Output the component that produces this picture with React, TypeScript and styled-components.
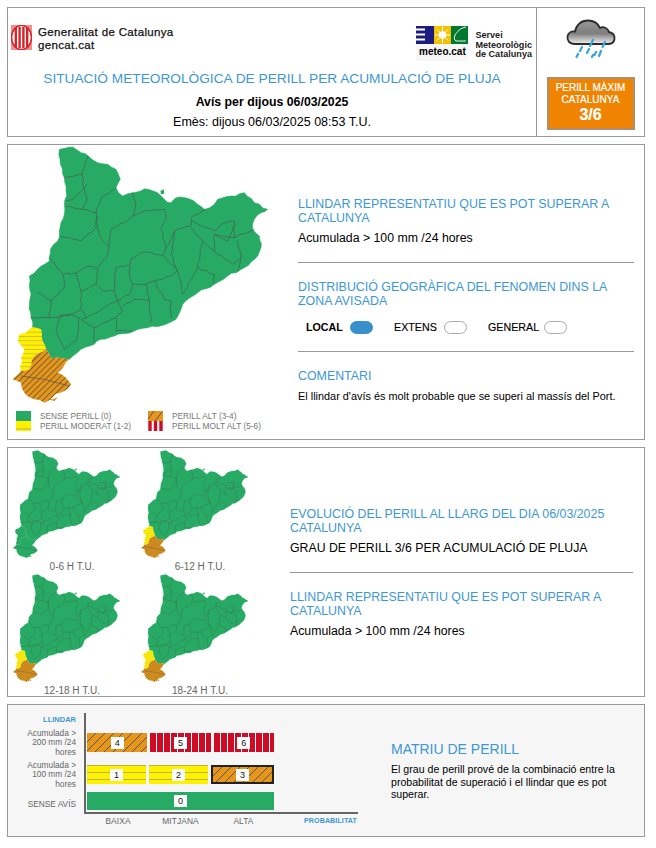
import React from "react";
import styled, { createGlobalStyle } from "styled-components";

const Global = createGlobalStyle`
  html, body { margin: 0; padding: 0; background: #fff; }
  body { font-family: "Liberation Sans", Arial, sans-serif; color: #000; }
`;

const Page = styled.div`
  width: 656px;
  height: 848px;
  box-sizing: border-box;
  padding: 7px 11px 0 7px;
  display: flex;
  flex-direction: column;
  gap: 7px;
`;

const Panel = styled.section<{ $h: number; $shade?: boolean }>`
  height: ${(p) => p.$h}px;
  box-sizing: border-box;
  border: 1px solid #999;
  background: ${(p) => (p.$shade ? "#f6f6f6" : "#fff")};
  display: flex;
`;

/* Header */
const HeadMain = styled.div`
  width: 529px;
  box-sizing: border-box;
  border-right: 1px solid #999;
  display: flex;
  flex-direction: column;
`;
const LogoRow = styled.div`
  display: flex;
  justify-content: space-between;
  align-items: flex-start;
  height: 57px;
  padding: 17px 4px 0 3px;
  box-sizing: border-box;
`;
const BrandLeft = styled.div`
  display: flex;
  gap: 6px;
  align-items: center;
  height: 25px;
`;
const MarkSlot = styled.div`
  margin-top: -1px;
  line-height: 0;
`;
const BrandName = styled.div`
  margin-top: 2px;
  font-size: 11.5px;
  line-height: 13px;
  letter-spacing: 0.35px;
  color: #111;
  -webkit-text-stroke: 0.25px #111;
`;
const BrandRight = styled.div`
  display: flex;
  gap: 7px;
  align-items: flex-start;
`;
const MeteoLogo = styled.div`
  width: 52px;
  height: 35px;
  margin-top: 1px;
  display: flex;
  flex-direction: column;
  background: #f7f7f7;
`;
const MeteoName = styled.div`
  font-size: 10px;
  font-weight: 700;
  line-height: 15px;
  text-align: center;
`;
const ServeiName = styled.div`
  margin-top: 6px;
  font-size: 9.1px;
  font-weight: 700;
  line-height: 9.5px;
  color: #222;
`;
const HeadTitle = styled.h1`
  margin: 0;
  font-size: 13.7px;
  line-height: 18px;
  font-weight: 400;
  color: #3d97d3;
  text-align: center;
  padding-top: 5px;
`;
const HeadDate = styled.div`
  margin-top: 7px;
  font-size: 12.3px;
  line-height: 14px;
  font-weight: 700;
  text-align: center;
`;
const HeadIssued = styled.div`
  margin-top: 6px;
  font-size: 12.5px;
  line-height: 14px;
  text-align: center;
`;
const HeadSide = styled.div`
  flex: 1;
  display: flex;
  flex-direction: column;
  align-items: center;
  padding-top: 11px;
`;
const MaxBadge = styled.div`
  width: 88px;
  height: 53px;
  margin-top: 16px;
  box-sizing: border-box;
  border: 2px solid #b08d6c;
  background: #f08400;
  color: #fff;
  text-align: center;
  font-size: 10px;
  line-height: 12px;
  padding-top: 3px;
  -webkit-text-stroke: 0.2px #fff;
`;
const MaxValue = styled.div`
  font-size: 16px;
  line-height: 18px;
  font-weight: 700;
`;

/* Map panels */
const MapColumn = styled.div`
  width: 290px;
  flex: none;
  display: flex;
  flex-direction: column;
`;
const BigMap = styled.svg`
  width: 283px;
  height: 263px;
  display: block;
  flex: none;
`;
const Legend = styled.div`
  display: grid;
  grid-template-columns: 132px 1fr;
  padding: 3px 0 0 8px;
`;
const LegendItem = styled.div`
  display: flex;
  align-items: center;
  height: 10px;
  font-size: 8.3px;
  color: #777;
`;
const Swatch = styled.svg`
  width: 15px;
  height: 10px;
  margin-right: 9px;
  flex: none;
`;
const InfoColumn = styled.div<{ $pad: number; $top: number; $w: number }>`
  width: ${(p) => p.$w}px;
  margin-left: ${(p) => p.$pad}px;
  padding-top: ${(p) => p.$top}px;
`;
const InfoTitle = styled.h2`
  margin: 0;
  font-size: 12.4px;
  line-height: 14px;
  font-weight: 400;
  color: #3d97d3;
`;
const InfoText = styled.p<{ $small?: boolean }>`
  margin: 6px 0 0;
  font-size: ${(p) => (p.$small ? "10.9px" : "12.3px")};
  line-height: 14px;
`;
const Rule = styled.hr<{ $gap: number; $after: number }>`
  border: 0;
  height: 1px;
  background: #999;
  margin: ${(p) => p.$gap}px 0 ${(p) => p.$after}px;
`;
const Options = styled.div`
  display: flex;
  align-items: center;
  height: 16px;
  margin: 11px 0 0 8px;
  font-size: 10.7px;
`;
const OptionLabel = styled.span<{ $on?: boolean; $w: number }>`
  display: inline-block;
  width: ${(p) => p.$w}px;
  font-weight: ${(p) => (p.$on ? 700 : 400)};
  -webkit-text-stroke: ${(p) => (p.$on ? "0" : "0.15px #000")};
`;
const Toggle = styled.span<{ $on?: boolean; $mr: number }>`
  display: inline-block;
  width: 23px;
  height: 13px;
  border-radius: 7px;
  box-sizing: border-box;
  margin-right: ${(p) => p.$mr}px;
  background: ${(p) => (p.$on ? "#3790c9" : "#fff")};
  border: 1px solid ${(p) => (p.$on ? "#3790c9" : "#aaa")};
`;
const MapsGrid = styled.div`
  width: 256px;
  flex: none;
  display: grid;
  grid-template-columns: 128px 128px;
  grid-auto-rows: 124px;
`;
const MapCell = styled.figure`
  margin: 0;
  display: flex;
  flex-direction: column;
  align-items: flex-start;
`;
const SmallMap = styled.svg`
  width: 122px;
  height: 112px;
  display: block;
`;
const MapCaption = styled.figcaption`
  width: 128px;
  margin-top: 2px;
  text-align: center;
  font-size: 10px;
  line-height: 10px;
  color: #666;
`;

/* Matrix */
const MatrixChart = styled.div`
  width: 383px;
  flex: none;
  display: flex;
  flex-direction: column;
  padding-top: 8px;
  box-sizing: border-box;
`;
const ChartBody = styled.div`
  display: flex;
`;
const YLabels = styled.div`
  width: 68px;
  flex: none;
  text-align: right;
  color: #666;
  font-size: 8.3px;
`;
const YTitle = styled.div`
  height: 12px;
  line-height: 14px;
  font-size: 7.5px;
  font-weight: 700;
  color: #3d97d3;
`;
const YRow = styled.div<{ $h: number; $mt: number }>`
  height: ${(p) => p.$h}px;
  margin-top: ${(p) => p.$mt}px;
  line-height: 9.5px;
  display: flex;
  align-items: center;
  justify-content: flex-end;
`;
const Plot = styled.div`
  margin-left: 8px;
  width: 274px;
  height: 101px;
  box-sizing: border-box;
  border-left: 2px solid #666;
  border-bottom: 2px solid #666;
  padding: 20px 0 0 1px;
  display: flex;
  flex-direction: column;
`;
const CellRow = styled.div<{ $mt?: number; $h?: number }>`
  display: flex;
  gap: 3px;
  width: 187px;
  height: ${(p) => p.$h ?? 19}px;
  margin-top: ${(p) => p.$mt ?? 0}px;
`;
const cellBg: Record<string, string> = {
  red: "repeating-linear-gradient(90deg,#ce0c25 0 5.7px,#fff 5.7px 7px)",
  orange: "repeating-linear-gradient(135deg,#e7961a 0 5.8px,#555 5.8px 6.5px)",
  yellow: "repeating-linear-gradient(180deg,#bdb23a 0 1px,#fff200 1px 7px)",
  green: "#27ab64",
};
const Cell = styled.div<{ $kind: string; $strong?: boolean }>`
  flex: 1;
  height: 100%;
  box-sizing: border-box;
  display: flex;
  align-items: center;
  justify-content: center;
  background: ${(p) => cellBg[p.$kind]};
  border: ${(p) => (p.$strong ? "2px solid #222" : "0")};
`;
const CellNum = styled.span`
  background: #fff;
  min-width: 12px;
  padding: 0 0.5px;
  height: 12px;
  line-height: 12px;
  font-size: 9px;
  text-align: center;
  color: #111;
`;
const XLabels = styled.div`
  display: flex;
  padding-left: 79px;
  font-size: 8.4px;
  line-height: 10px;
  color: #666;
  margin-top: 2px;
  letter-spacing: 0.1px;
`;
const XLabel = styled.span<{ $w: number }>`
  width: ${(p) => p.$w}px;
  text-align: center;
`;
const XTitle = styled.span`
  margin-left: 29px;
  font-size: 7.1px;
  font-weight: 700;
  color: #3d97d3;
`;
const MatrixInfo = styled.div`
  padding-top: 36px;
  width: 225px;
`;
const MatrixTitle = styled.h2`
  margin: 0;
  font-size: 14px;
  line-height: 16px;
  font-weight: 400;
  color: #3d97d3;
`;
const MatrixText = styled.p`
  margin: 6px 0 0;
  font-size: 10.6px;
  line-height: 12.5px;
`;

/* Hand-traced map shapes, roughened so that borders look like real coastlines. */
const noise = (a: number, b: number) => {
  const v = Math.sin(a * 12.9898 + b * 78.233) * 43758.5453;
  return v - Math.floor(v) - 0.5;
};
function rough(d: string, amp = 7): string {
  return d
    .split(/(?=M)/)
    .map((sub) => {
      const nums = (sub.match(/-?\d+(\.\d+)?/g) ?? []).map(Number);
      const pts: [number, number][] = [];
      for (let i = 0; i < nums.length; i += 2) pts.push([nums[i], nums[i + 1]]);
      if (/Z/.test(sub)) pts.push(pts[0]);
      let out = `M${pts[0][0]},${pts[0][1]}`;
      for (let i = 1; i < pts.length; i++) {
        let [a, b] = [pts[i - 1], pts[i]];
        const flip = a[0] > b[0] || (a[0] === b[0] && a[1] > b[1]);
        if (flip) [a, b] = [b, a];
        const len = Math.hypot(b[0] - a[0], b[1] - a[1]);
        const nx = -(b[1] - a[1]) / (len || 1);
        const ny = (b[0] - a[0]) / (len || 1);
        const steps = Math.max(1, Math.round(len / 14));
        const seg: [number, number][] = [];
        for (let s = 1; s < steps; s++) {
          const t = s / steps;
          const o = noise(a[0] + s, b[1] + s * 3) * amp;
          seg.push([a[0] + (b[0] - a[0]) * t + nx * o, a[1] + (b[1] - a[1]) * t + ny * o]);
        }
        if (flip) seg.reverse();
        seg.forEach((p) => (out += ` L${p[0].toFixed(1)},${p[1].toFixed(1)}`));
        out += ` L${pts[i][0]},${pts[i][1]}`;
      }
      return out + (/Z/.test(sub) ? " Z" : "");
    })
    .join(" ");
}

const OUTLINE = rough(
  "M175,25 L190,22 L215,18 L240,35 L262,45 L290,65 L320,70 L345,85 L358,115 L345,140 L365,165 L395,155 L430,143 L470,155 L490,175 L510,185 L525,170 L560,172 L590,190 L610,205 L640,190 L650,175 L690,165 L730,155 L760,185 L800,205 L780,215 L760,235 L755,265 L775,285 L780,320 L770,345 L730,380 L680,405 L640,430 L590,455 L545,490 L525,535 L495,550 L440,560 L400,570 L340,585 L300,595 L280,610 L240,625 L205,655 L150,652 L135,625 L122,590 L120,565 L95,558 L90,530 L85,490 L90,460 L85,405 L110,385 L145,360 L148,325 L170,300 L175,270 L190,220 L195,150 L190,110 L178,70 Z"
);
const YELLOW = rough(
  "M95,558 L120,565 L122,590 L135,625 L100,645 L85,685 L60,690 L60,650 L70,625 L50,600 L55,580 L75,575 Z"
);
const ORANGE = rough(
  "M135,625 L150,652 L205,655 L170,695 L195,710 L210,730 L190,750 L165,758 L130,785 L100,775 L70,755 L60,725 L35,715 L60,690 L85,685 L100,645 Z M140,775 L170,768 L160,780 Z"
);
const LINES = rough(
  [
    "M262,45 L245,90 L245,130 L258,170 L245,205 L285,215 L300,170 L345,140",
    "M190,110 L245,100",
    "M195,195 L245,205",
    "M258,130 L215,175 L195,180",
    "M175,285 L240,300 L285,260 L285,215",
    "M285,215 L290,260 L305,300 L325,320 L330,265 L380,238 L395,225 L430,210 L490,205 L495,235 L480,265 L495,320 L485,345 L450,335 L420,335 L390,355 L385,400 L395,430 L435,430",
    "M395,155 L405,190 L395,225",
    "M325,320 L320,345 L290,385 L285,430 L305,450 L340,450 L345,380 L385,370",
    "M145,350 L185,400 L225,395 L265,375 L290,385",
    "M185,400 L190,440 L150,480 L145,530 L210,520 L240,505 L240,450 L225,395",
    "M240,450 L285,430",
    "M240,505 L255,530 L300,505 L350,480 L340,450",
    "M350,480 L385,460 L395,430",
    "M350,480 L365,510 L345,530 L345,570 L395,570",
    "M255,530 L240,535 L280,560 L280,605",
    "M280,560 L345,530",
    "M210,520 L235,530 L225,600 L190,625 L165,570 L175,530 L210,520",
    "M365,495 L400,475 L445,480 L450,545",
    "M445,480 L435,430 L460,420 L490,475 L510,480 L510,530",
    "M460,420 L510,405 L530,390 L490,345",
    "M495,320 L520,270 L570,255 L570,230 L615,205",
    "M520,270 L510,340 L530,390 L545,460 L590,380 L640,400 L640,430",
    "M590,380 L605,300 L640,330 L640,280 L700,290 L700,240 L660,250 L640,270 L570,240",
    "M640,280 L680,300 L700,250",
    "M640,330 L695,370 L720,350 L710,390",
    "M700,290 L720,280 L760,265",
    "M720,350 L710,300",
    "M605,300 L570,260",
    "M90,530 L145,530",
    "M150,480 L110,455",
  ].join(" "),
  5
);

function MapShapes({ id, alert, lineW }: { id: string; alert: boolean; lineW: number }) {
  return (
    <>
      <defs>
        <pattern id={`${id}o`} width="13" height="13" patternUnits="userSpaceOnUse" patternTransform="rotate(45)">
          <rect width="13" height="13" fill="#e7961a" />
          <rect x="0" width="3" height="13" fill="#77602f" />
        </pattern>
        <pattern id={`${id}y`} width="12" height="13" patternUnits="userSpaceOnUse">
          <rect width="12" height="13" fill="#fff200" />
          <rect y="0" width="12" height="2.5" fill="#c9b933" />
        </pattern>
      </defs>
      <path d={OUTLINE} fill="#27ab64" stroke="#27ab64" strokeWidth="1.5" />
      <path d="M478,150 L488,145 L490,158 L480,160 Z" fill="#27ab64" />
      <path d={YELLOW} fill={alert ? `url(#${id}y)` : "#27ab64"} stroke={alert ? "none" : "#27ab64"} />
      <path d={ORANGE} fill={alert ? `url(#${id}o)` : "#27ab64"} stroke={alert ? "none" : "#27ab64"} />
      <path d="M60,705 L130,715 L205,735" fill="none" stroke="#555" strokeWidth={lineW} />
      <path d={LINES} fill="none" stroke="#46604f" strokeWidth={lineW} strokeLinejoin="round" />
    </>
  );
}

function GencatMark() {
  return (
    <svg width="21" height="25" viewBox="0 0 21 25" aria-hidden="true">
      <rect width="21" height="25" fill="#ef8f8f" />
      <ellipse cx="10.5" cy="12.5" rx="10" ry="12" fill="#fff" />
      <ellipse cx="10.5" cy="12.5" rx="10" ry="12" fill="none" stroke="#d8232a" strokeWidth="1.6" />
      {[3.6, 7.4, 11.2, 15].map((x) => (
        <rect key={x} x={x} y="2" width="2.4" height="21" fill="#d8232a" />
      ))}
    </svg>
  );
}

function MeteoIcons() {
  return (
    <svg width="52" height="18" viewBox="0 0 52 18" aria-hidden="true" style={{ flex: "none" }}>
      <rect width="18" height="18" fill="#1c1c80" />
      <path d="M0,3.5h9 M0,8.500h9 M0,13.500h9" stroke="#fff" strokeWidth="2" />
      <rect x="18" width="17" height="18" fill="#f2c200" />
      <path d="M26.5,1v16 M19,9h15 M21,3.500l11,11 M32,3.500l-11,11" stroke="#fff" strokeWidth="1" />
      <circle cx="26.5" cy="9" r="3.8" fill="#fff" />
      <rect x="35" width="17" height="18" fill="#00792f" />
      <path d="M50,1C44,2 41,6 39,9C38,12 38,14 40,15L50,15" fill="none" stroke="#fff" strokeWidth="0.9" />
    </svg>
  );
}

function RainCloud() {
  return (
    <svg width="50" height="42" viewBox="0 0 50 42" aria-hidden="true">
      <defs>
        <linearGradient id="cloudFill" x1="0" y1="0" x2="0" y2="1">
          <stop offset="0" stopColor="#9a9a9a" />
          <stop offset="0.55" stopColor="#7d7d7d" />
          <stop offset="1" stopColor="#f0f0f0" />
        </linearGradient>
      </defs>
      <path
        d="M9,25 C3,25 1,21 1.5,17.5 C2,14 5,12 9,12.5 C10,6 15,1.5 22,1.5 C28,1.5 32,4.5 34,9 C37,7 42,9 43,13 C47,13.5 49,16.5 48.5,20 C48,23.5 45.5,25 42,25 Z"
        fill="url(#cloudFill)"
        stroke="#2c2c2c"
        strokeWidth="1.8"
      />
      <g stroke="#38a3dc" strokeWidth="2.2" strokeLinecap="round" fill="none">
        <path d="M16,28l-2,4 M12,35l-1.500,3" />
        <path d="M27,21l-3,6 M23,30l-2,4" />
        <path d="M39,23l-2.500,5 M35,32l-2,5" />
        <path d="M30,33l-1.500,3 M27,36l-1,2" />
      </g>
    </svg>
  );
}

function LegendSwatch({ kind }: { kind: string }) {
  return (
    <Swatch viewBox="0 0 15 10" aria-hidden="true">
      {kind === "green" && <rect width="15" height="10" fill="#27ab64" />}
      {kind === "yellow" && (
        <>
          <rect width="15" height="10" fill="#fff200" />
          <rect y="7.5" width="15" height="1" fill="#bdb23a" />
        </>
      )}
      {kind === "orange" && (
        <>
          <rect width="15" height="10" fill="#e7961a" />
          <path d="M0,8L6,0 M7,10L14,1" stroke="#555" strokeWidth="1" />
        </>
      )}
      {kind === "red" && (
        <>
          <rect width="15" height="10" fill="#fff" />
          <path d="M2,0v10 M7.500,0v10 M13,0v10" stroke="#ce0c25" strokeWidth="3.4" />
        </>
      )}
    </Swatch>
  );
}

const periods = [
  { label: "0-6 H T.U.", alert: false },
  { label: "6-12 H T.U.", alert: true },
  { label: "12-18 H T.U.", alert: true },
  { label: "18-24 H T.U.", alert: true },
];

export default function App() {
  return (
    <Page>
      <Global />
      <Panel $h={130}>
        <HeadMain>
          <LogoRow>
            <BrandLeft>
              <MarkSlot>
                <GencatMark />
              </MarkSlot>
              <BrandName>
                Generalitat de Catalunya
                <br />
                gencat.cat
              </BrandName>
            </BrandLeft>
            <BrandRight>
              <MeteoLogo>
                <MeteoIcons />
                <MeteoName>meteo.cat</MeteoName>
              </MeteoLogo>
              <ServeiName>
                Servei
                <br />
                Meteorològic
                <br />
                de Catalunya
              </ServeiName>
            </BrandRight>
          </LogoRow>
          <HeadTitle>SITUACIÓ METEOROLÒGICA DE PERILL PER ACUMULACIÓ DE PLUJA</HeadTitle>
          <HeadDate>Avís per dijous 06/03/2025</HeadDate>
          <HeadIssued>Emès: dijous 06/03/2025 08:53 T.U.</HeadIssued>
        </HeadMain>
        <HeadSide>
          <RainCloud />
          <MaxBadge>
            PERILL MÀXIM
            <br />
            CATALUNYA
            <MaxValue>3/6</MaxValue>
          </MaxBadge>
        </HeadSide>
      </Panel>

      <Panel $h={296}>
        <MapColumn>
          <BigMap viewBox="21 12 849 789" aria-label="Mapa de perill">
            <MapShapes id="big" alert lineW={2.2} />
          </BigMap>
          <Legend>
            <LegendItem>
              <LegendSwatch kind="green" />
              SENSE PERILL (0)
            </LegendItem>
            <LegendItem>
              <LegendSwatch kind="orange" />
              PERILL ALT (3-4)
            </LegendItem>
            <LegendItem>
              <LegendSwatch kind="yellow" />
              PERILL MODERAT (1-2)
            </LegendItem>
            <LegendItem>
              <LegendSwatch kind="red" />
              PERILL MOLT ALT (5-6)
            </LegendItem>
          </Legend>
        </MapColumn>
        <InfoColumn $pad={0} $top={52} $w={336}>
          <InfoTitle>LLINDAR REPRESENTATIU QUE ES POT SUPERAR A CATALUNYA</InfoTitle>
          <InfoText>Acumulada &gt; 100 mm /24 hores</InfoText>
          <Rule $gap={17} $after={17} />
          <InfoTitle>DISTRIBUCIÓ GEOGRÀFICA DEL FENOMEN DINS LA ZONA AVISADA</InfoTitle>
          <Options>
            <OptionLabel $on $w={44}>LOCAL</OptionLabel>
            <Toggle $on $mr={21} />
            <OptionLabel $w={50}>EXTENS</OptionLabel>
            <Toggle $mr={21} />
            <OptionLabel $w={56}>GENERAL</OptionLabel>
            <Toggle $mr={0} />
          </Options>
          <Rule $gap={16} $after={17} />
          <InfoTitle>COMENTARI</InfoTitle>
          <InfoText $small>El llindar d'avís és molt probable que se superi al massís del Port.</InfoText>
        </InfoColumn>
      </Panel>

      <Panel $h={250}>
        <MapsGrid>
          {periods.map((p, i) => (
            <MapCell key={p.label}>
              <SmallMap viewBox="0 0 870 800" aria-label={p.label}>
                <MapShapes id={`s${i}`} alert={p.alert} lineW={2.6} />
              </SmallMap>
              <MapCaption>{p.label}</MapCaption>
            </MapCell>
          ))}
        </MapsGrid>
        <InfoColumn $pad={26} $top={59} $w={343}>
          <InfoTitle>
            EVOLUCIÓ DEL PERILL AL LLARG DEL DIA 06/03/2025
            <br />
            CATALUNYA
          </InfoTitle>
          <InfoText>GRAU DE PERILL 3/6 PER ACUMULACIÓ DE PLUJA</InfoText>
          <Rule $gap={17} $after={17} />
          <InfoTitle>LLINDAR REPRESENTATIU QUE ES POT SUPERAR A CATALUNYA</InfoTitle>
          <InfoText>Acumulada &gt; 100 mm /24 hores</InfoText>
        </InfoColumn>
      </Panel>

      <Panel $h={133} $shade>
        <MatrixChart>
          <ChartBody>
            <YLabels>
              <YTitle>LLINDAR</YTitle>
              <YRow $h={28} $mt={4}>
                Acumulada &gt;
                <br />
                200 mm /24
                <br />
                hores
              </YRow>
              <YRow $h={28} $mt={4}>
                Acumulada &gt;
                <br />
                100 mm /24
                <br />
                hores
              </YRow>
              <YRow $h={18} $mt={7}>SENSE AVÍS</YRow>
            </YLabels>
            <Plot>
              <CellRow>
                <Cell $kind="orange"><CellNum>4</CellNum></Cell>
                <Cell $kind="red"><CellNum>5</CellNum></Cell>
                <Cell $kind="red"><CellNum>6</CellNum></Cell>
              </CellRow>
              <CellRow $mt={13}>
                <Cell $kind="yellow"><CellNum>1</CellNum></Cell>
                <Cell $kind="yellow"><CellNum>2</CellNum></Cell>
                <Cell $kind="orange" $strong><CellNum>3</CellNum></Cell>
              </CellRow>
              <CellRow $mt={8} $h={18}>
                <Cell $kind="green"><CellNum>0</CellNum></Cell>
              </CellRow>
            </Plot>
          </ChartBody>
          <XLabels>
            <XLabel $w={62}>BAIXA</XLabel>
            <XLabel $w={63}>MITJANA</XLabel>
            <XLabel $w={63}>ALTA</XLabel>
            <XTitle>PROBABILITAT</XTitle>
          </XLabels>
        </MatrixChart>
        <MatrixInfo>
          <MatrixTitle>MATRIU DE PERILL</MatrixTitle>
          <MatrixText>
            El grau de perill prové de la combinació entre la probabilitat de superació i el llindar que es pot superar.
          </MatrixText>
        </MatrixInfo>
      </Panel>
    </Page>
  );
}
